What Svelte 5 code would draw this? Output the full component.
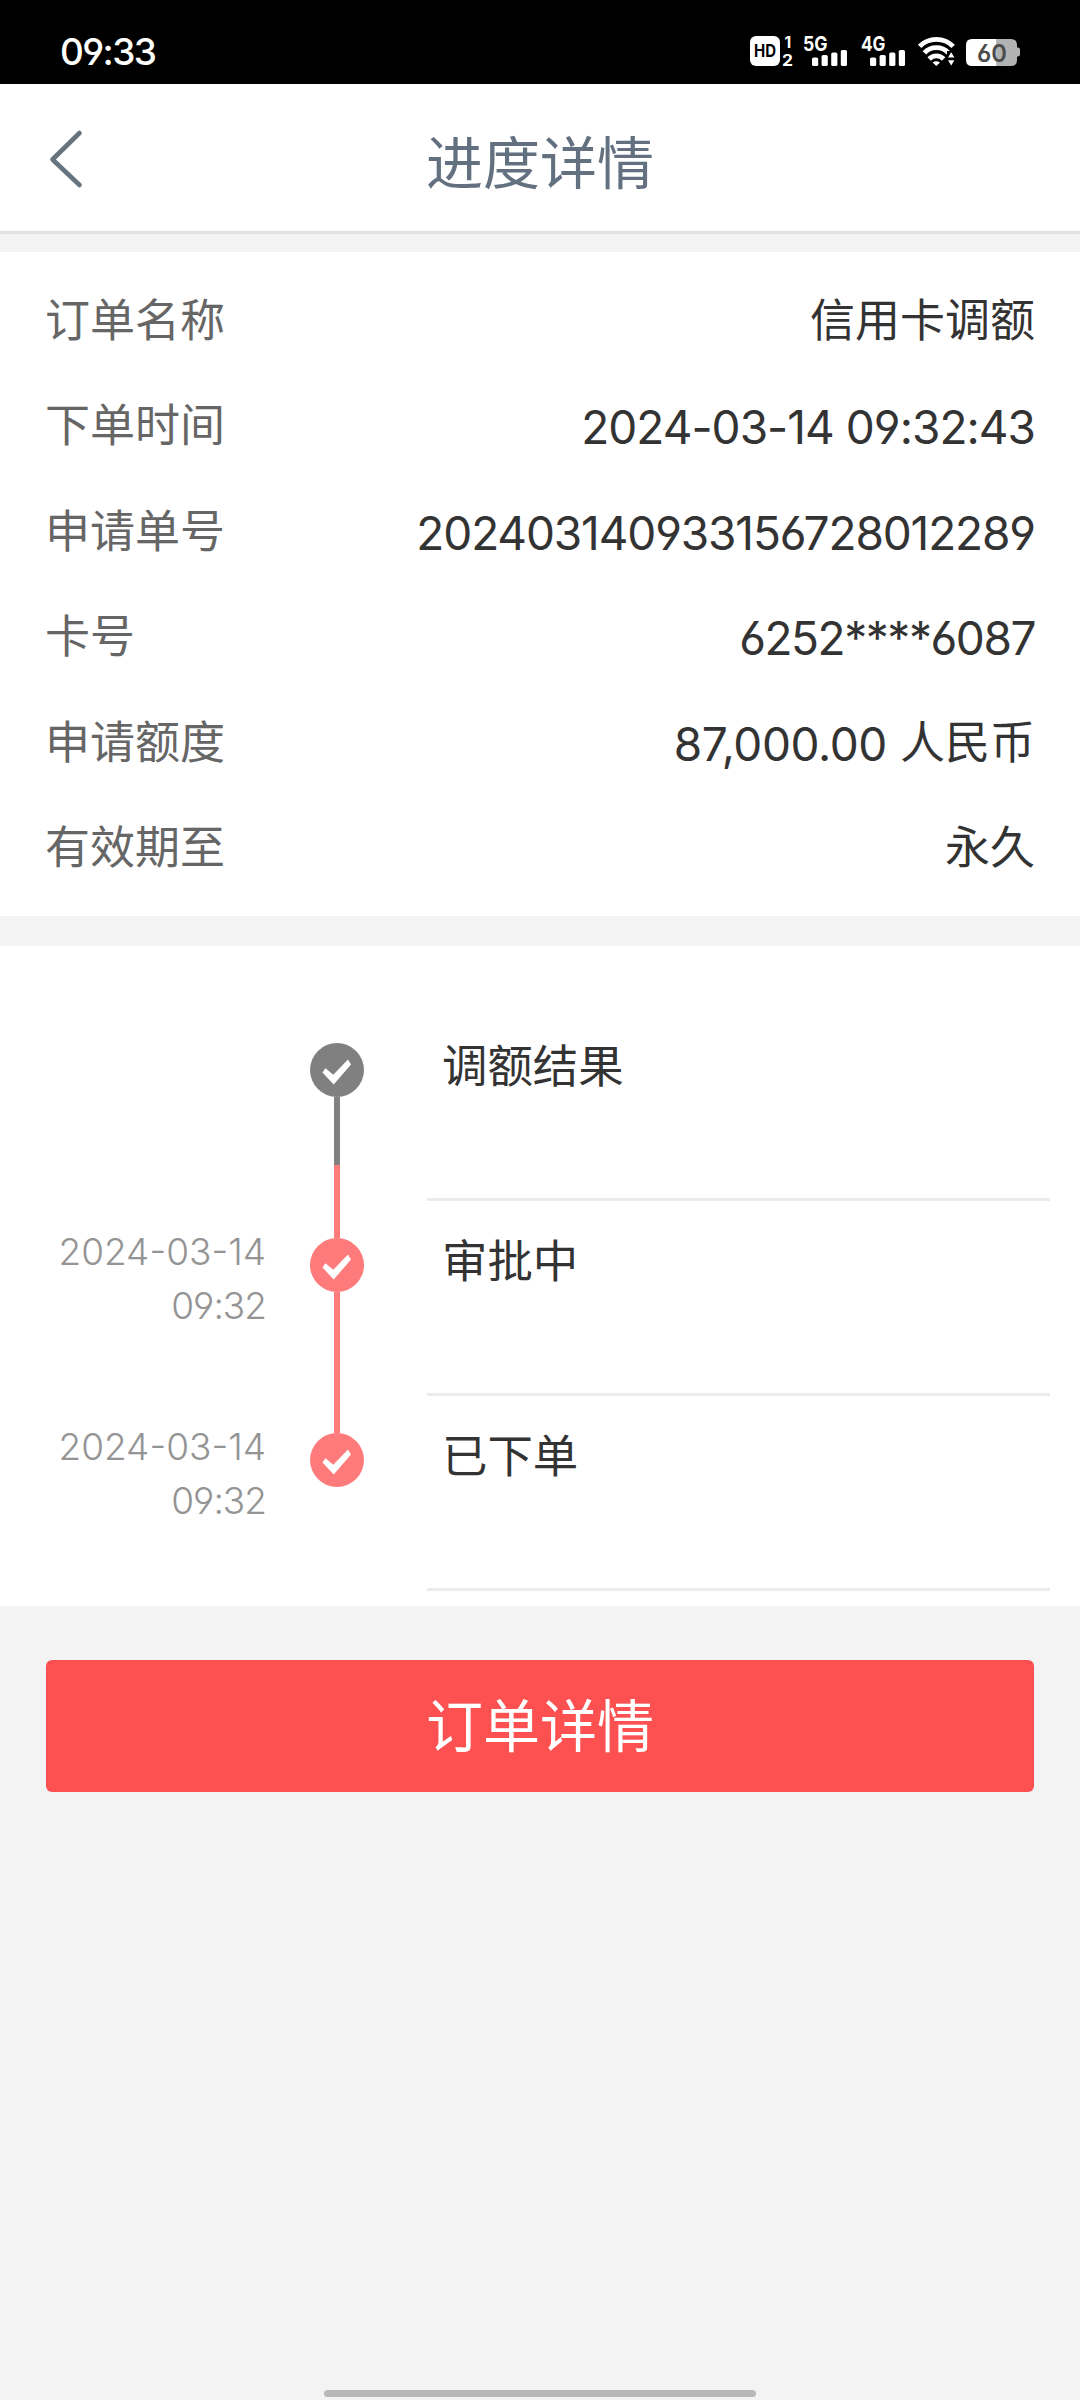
<script lang="ts">
  type Step = {
    title: string;
    date?: string;
    time?: string;
    state: "pending" | "done";
  };

  const details = [
    { label: "订单名称", value: "信用卡调额", kind: "cjk" },
    { label: "下单时间", value: "2024-03-14 09:32:43", kind: "date" },
    { label: "申请单号", value: "202403140933156728012289", kind: "number" },
    { label: "卡号", value: "6252****6087", kind: "card" },
    { label: "申请额度", value: "87,000.00", unit: "人民币", kind: "amount" },
    { label: "有效期至", value: "永久", kind: "cjk" },
  ];

  const steps: Step[] = [
    { title: "调额结果", state: "pending" },
    { title: "审批中", date: "2024-03-14", time: "09:32", state: "done" },
    { title: "已下单", date: "2024-03-14", time: "09:32", state: "done" },
  ];

  const networks = ["5G", "4G"];
</script>

<div class="screen">
  <div class="status-bar">
    <span class="clock">09:33</span>
    <div class="status-icons">
      <svg class="hd" width="44" height="48" viewBox="0 -8 44 48">
        <rect x="0" y="1" width="30" height="30" rx="6" fill="#fff" />
        <text x="4" y="22.3" font-size="17" font-weight="700" textLength="22" lengthAdjust="spacingAndGlyphs" fill="#000">HD</text>
        <text x="34.5" y="13" font-size="15.5" font-weight="700" fill="#fff">1</text>
        <text x="32" y="30.5" font-size="15.5" font-weight="700" textLength="11" lengthAdjust="spacingAndGlyphs" fill="#fff">2</text>
      </svg>
      {#each networks as network}
        <svg class="signal" width="46" height="48" viewBox="0 -8 46 48">
          <text x="0" y="15.5" font-size="20" font-weight="700" textLength="24.5" lengthAdjust="spacingAndGlyphs" fill="#fff">{network}</text>
          <g fill="#fff">
            <rect x="9" y="22.5" width="6.2" height="8.5" rx="1.6" />
            <rect x="18.6" y="20" width="6.2" height="11" rx="1.6" />
            <rect x="28.2" y="17.5" width="6.2" height="13.5" rx="1.6" />
            <rect x="37.8" y="15" width="6.2" height="16" rx="1.6" />
          </g>
        </svg>
      {/each}
      <svg class="wifi" width="38" height="48" viewBox="0 -8 38 48">
        <g fill="none" stroke="#fff" stroke-width="4.8">
          <path d="M1.6 11.4a23.6 23.6 0 0 1 33.6 0" />
          <path d="M6.4 17.9a16.4 16.4 0 0 1 24 0" />
          <path d="M11.2 24a9.8 9.8 0 0 1 14.4 0" />
        </g>
        <path d="M14.6 27.4q3.7-2.4 7.4 0L18.3 31z" fill="#fff" />
        <path d="M29 16h9v16h-9z" fill="#000" />
        <path d="M30 22.5l3.2-5.2 3.2 5.2zM30 25.2h6.4l-3.2 5.2z" fill="#fff" />
      </svg>
      <svg class="battery" width="56" height="48" viewBox="0 -8 56 48">
        <path d="M30.7 4H45q6 0 6 6v2.5h1q2 0 2 2v5q0 2-2 2h-1V25q0 6-6 6H30.7z" fill="#b2b2b2" />
        <path d="M30.7 4H6Q0 4 0 10v15q0 6 6 6h24.7z" fill="#fff" />
        <text x="11" y="26.5" font-size="24.5" font-weight="600" textLength="30" lengthAdjust="spacingAndGlyphs" fill="#4c4c4c">60</text>
      </svg>
    </div>
  </div>

  <header class="header">
    <button class="back" aria-label="返回">
      <svg width="36" height="60" viewBox="0 0 36 60">
        <path d="M31.5 4L4.5 30.5 31.5 56" fill="none" stroke="#66747f" stroke-width="4.6" stroke-linecap="round" stroke-linejoin="round" />
      </svg>
    </button>
    <h1>进度详情</h1>
  </header>

  <section class="details">
    {#each details as item}
      <div class="row">
        <span class="label">{item.label}</span>
        <span class="value">
          <span class={item.kind}>{item.value}</span>{#if item.unit}<span class="unit">{item.unit}</span>{/if}
        </span>
      </div>
    {/each}
  </section>

  <section class="timeline">
    {#each steps as step, i}
      <div class="step {step.state}" class:first={i === 0} class:last={i === steps.length - 1}>
        <div class="when">
          {#if step.date}
            <span class="day">{step.date}</span>
            <span class="hour">{step.time}</span>
          {/if}
        </div>
        <div class="rail">
          <span class="line before"></span>
          <span class="dot">
            <svg width="54" height="54" viewBox="0 0 54 54">
              <path d="M12.5 29.5l3-4.2 7.8 6.4L38 16.5 41 21.5 23.7 41.5z" fill="#fff" />
            </svg>
          </span>
          <span class="line after"></span>
        </div>
        <div class="what">{step.title}</div>
      </div>
    {/each}
  </section>

  <div class="actions">
    <button class="primary">订单详情</button>
  </div>

  <div class="home-bar"></div>
</div>

<style>
  :global(body) {
    margin: 0;
    background: #f3f3f3;
  }

  .screen {
    display: flex;
    flex-direction: column;
    width: 1080px;
    height: 2400px;
    background: #f3f3f3;
    color: #333;
    font-family: Inter, "Noto Sans CJK SC", sans-serif;
    font-feature-settings: "cv03", "cv04";
  }

  button {
    padding: 0;
    border: 0;
    font-family: inherit;
  }

  .status-bar {
    display: flex;
    justify-content: space-between;
    height: 84px;
    padding: 0 58px 0 60px;
    background: #000;
    color: #fff;
  }

  .clock {
    margin-top: 30px;
    font-size: 37px;
    line-height: 44px;
    font-weight: 500;
    letter-spacing: -1.6px;
  }

  .status-icons {
    display: flex;
    margin-top: 27px;
  }

  .signal {
    margin-left: 9px;
  }

  .signal + .signal {
    margin-left: 12px;
  }

  .wifi {
    margin-left: 11px;
  }

  .battery {
    margin-left: 10px;
  }

  .header {
    display: grid;
    grid-template-columns: 200px 1fr 200px;
    height: 147px;
    background: #fff;
    border-bottom: 3px solid #e1e1e1;
  }

  .back {
    display: flex;
    padding: 45px 0 0 48px;
    background: none;
  }

  h1 {
    margin: 0;
    padding-top: 38px;
    font-size: 57px;
    line-height: 84px;
    font-weight: 400;
    text-align: center;
    color: #637080;
  }

  .details {
    box-sizing: border-box;
    height: 664px;
    margin-top: 18px;
    padding: 16px 45px 0;
    background: #fff;
  }

  .row {
    display: flex;
    justify-content: space-between;
    height: 105.4px;
    line-height: 105.4px;
    font-size: 45px;
  }

  .label {
    color: #666;
  }

  .value {
    display: flex;
  }

  .date,
  .number,
  .card,
  .amount {
    padding-top: 2px;
    font-size: 46px;
  }

  .date {
    letter-spacing: -0.96px;
  }

  .number {
    letter-spacing: -1.13px;
  }

  .card {
    letter-spacing: -1.45px;
  }

  .amount {
    letter-spacing: -0.4px;
  }

  .unit {
    margin-left: 13px;
  }

  .timeline {
    box-sizing: border-box;
    height: 660px;
    margin-top: 30px;
    padding-top: 60px;
    background: #fff;
  }

  .step {
    display: grid;
    grid-template-columns: 266px 142px 1fr;
    height: 195px;
    --tone: #ff7b7b;
  }

  .pending {
    --tone: #808080;
  }

  .when {
    display: flex;
    flex-direction: column;
    align-items: flex-end;
    padding-top: 24px;
    font-size: 37px;
    line-height: 54px;
    font-weight: 300;
    color: #949494;
  }

  .hour {
    letter-spacing: -1px;
  }

  .rail {
    display: flex;
    flex-direction: column;
    align-items: center;
  }

  .dot {
    width: 54px;
    height: 54px;
    border-radius: 50%;
    background: var(--tone);
  }

  .dot svg {
    display: block;
  }

  .line {
    width: 6px;
    background: var(--tone);
  }

  .before {
    height: 37px;
  }

  .after {
    flex: 1;
  }

  /* the pending colour only reaches halfway to the next step */
  .first .after {
    background: linear-gradient(#808080 68px, #ff7b7b 68px);
  }

  .first .before,
  .last .after {
    background: none;
  }

  .what {
    margin: 0 30px 0 19px;
    padding: 28px 0 0 15px;
    border-bottom: 3px solid #ebebeb;
    font-size: 45.4px;
    line-height: 66px;
  }

  .actions {
    padding: 54px 46px 0;
  }

  .primary {
    display: block;
    width: 100%;
    height: 132px;
    border-radius: 6px;
    background: #fd5050;
    color: #fff;
    font-size: 57px;
    line-height: 134px;
  }

  .home-bar {
    width: 432px;
    height: 7px;
    margin: auto auto 3px;
    border-radius: 4px;
    background: #b9b9b9;
  }
</style>
